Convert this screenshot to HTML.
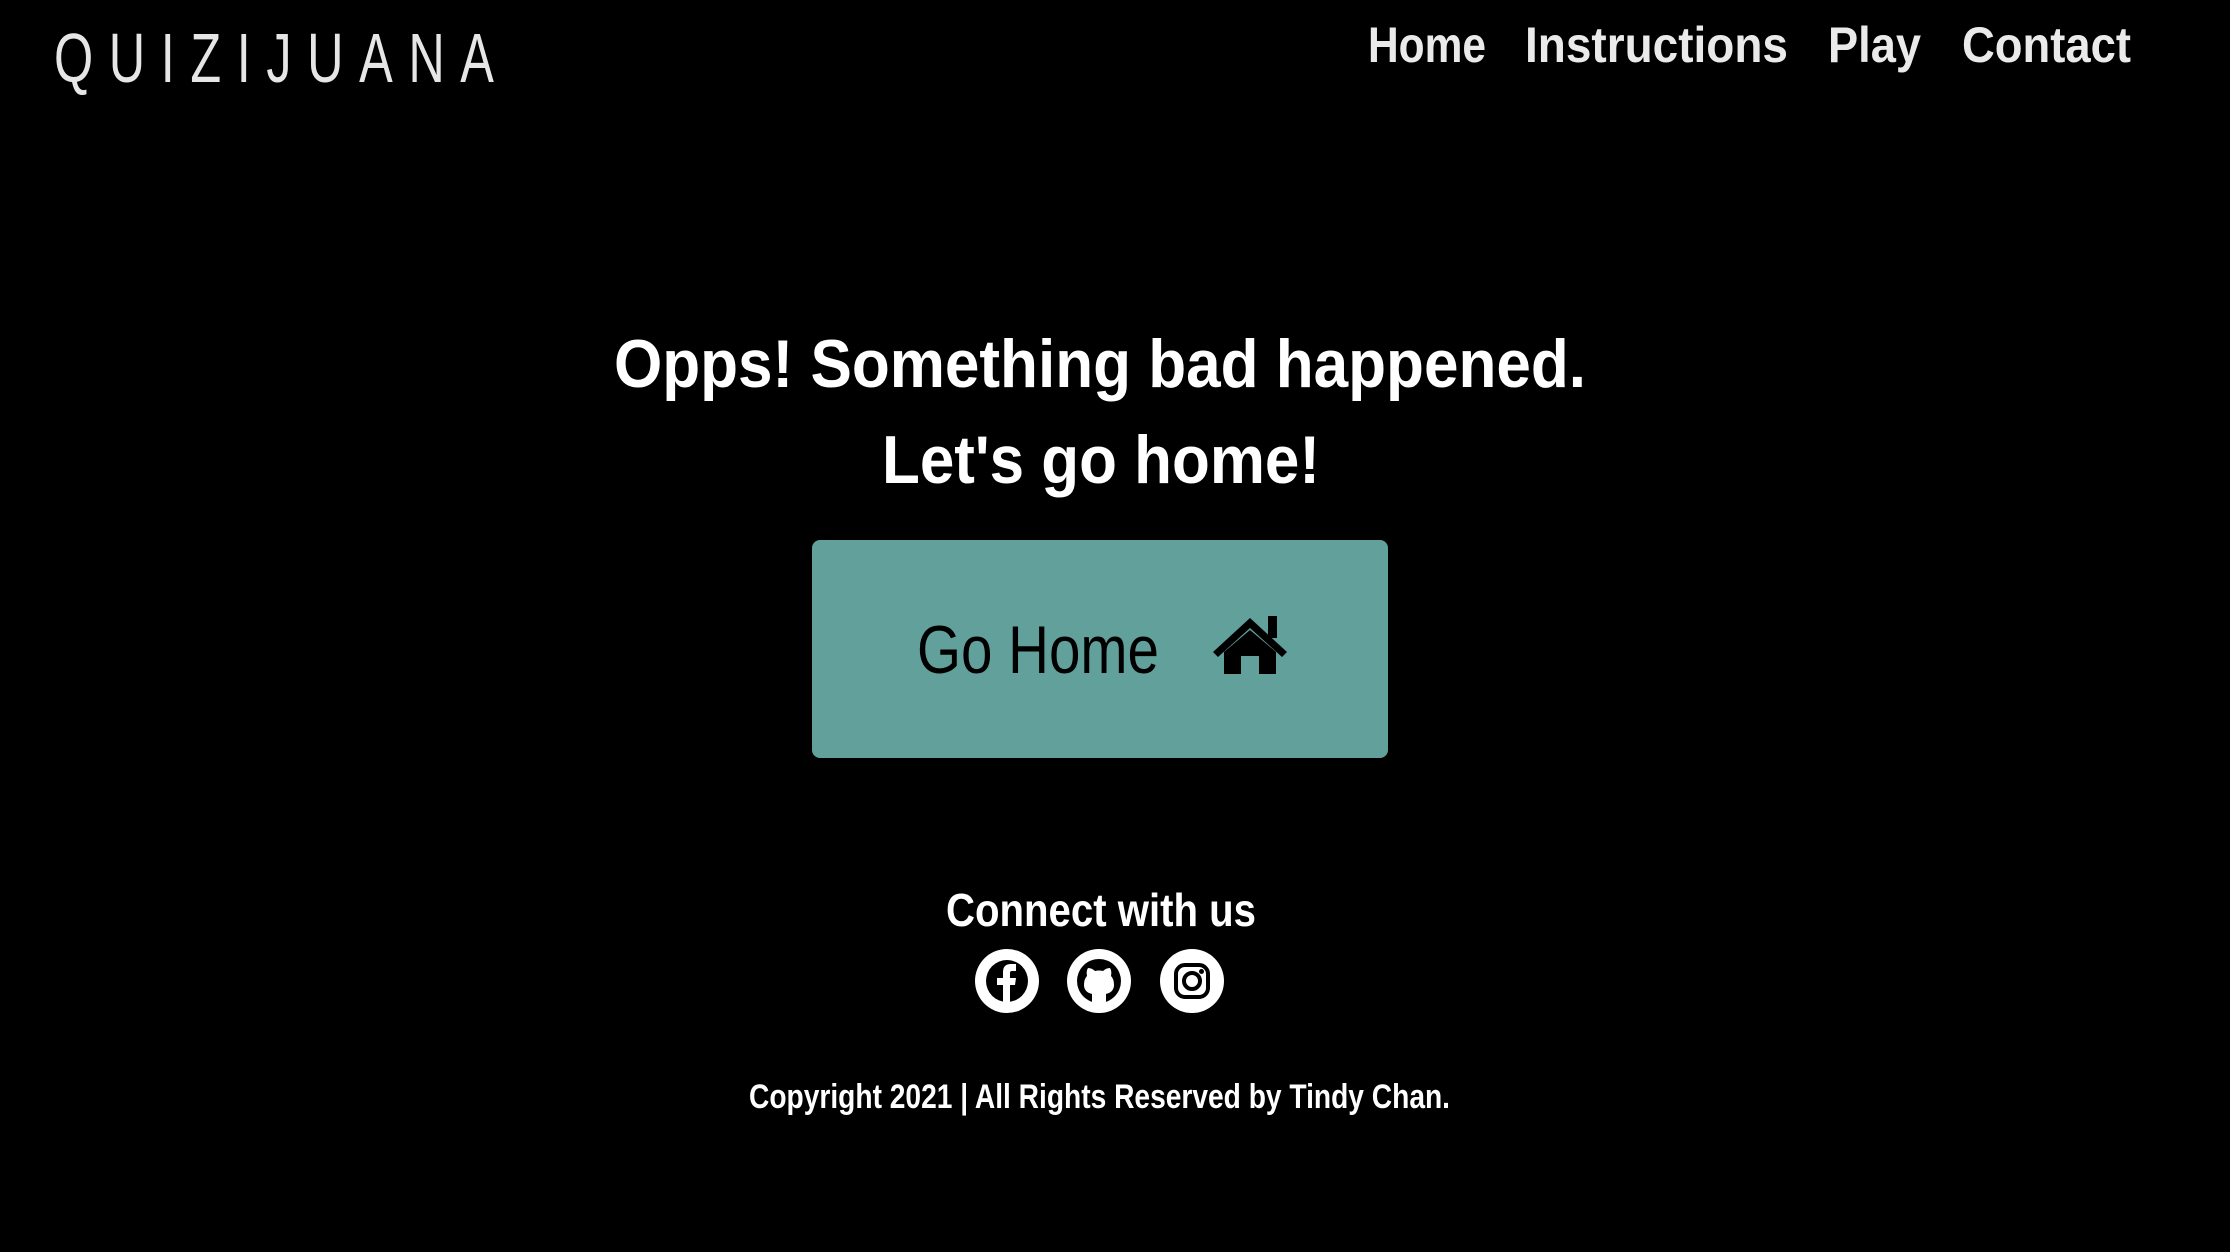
<!DOCTYPE html>
<html><head><meta charset="utf-8"><style>
html,body{margin:0;padding:0;background:#000;width:2230px;height:1252px;overflow:hidden}
svg{display:block}
text{font-family:"Liberation Sans",sans-serif}
</style></head><body>
<svg width="2230" height="1252" viewBox="0 0 2230 1252" xmlns="http://www.w3.org/2000/svg">
<rect width="2230" height="1252" fill="#000"/>
<g transform="translate(54,82) scale(0.72,1)">
<text x="0" y="0" font-size="70" fill="#e6e6e6" textLength="611" lengthAdjust="spacing">QUIZIJUANA</text>
</g>
<g fill="#eaeaea" font-size="50" font-weight="bold">
<text x="1368" y="62" textLength="118" lengthAdjust="spacingAndGlyphs">Home</text>
<text x="1525" y="62" textLength="263" lengthAdjust="spacingAndGlyphs">Instructions</text>
<text x="1828" y="62" textLength="93" lengthAdjust="spacingAndGlyphs">Play</text>
<text x="1962" y="62" textLength="169" lengthAdjust="spacingAndGlyphs">Contact</text>
</g>
<g fill="#fff" font-size="68" font-weight="bold">
<text x="614" y="387" textLength="972" lengthAdjust="spacingAndGlyphs">Opps! Something bad happened.</text>
<text x="882" y="483" textLength="438" lengthAdjust="spacingAndGlyphs">Let's go home!</text>
</g>
<rect x="812" y="540" width="576" height="218" rx="8" fill="#62a09c"/>
<text x="917" y="673" font-size="68" fill="#000" textLength="242" lengthAdjust="spacingAndGlyphs">Go Home</text>
<g fill="#000">
<path d="M1213 652 L1250 618 L1287 652 L1282 657 L1250 628 L1218 657 Z"/>
<rect x="1268" y="616" width="9" height="22"/>
<path d="M1224 652 L1250 630 L1276 652 L1276 674 L1259 674 L1259 656 L1241 656 L1241 674 L1224 674 Z"/>
</g>
<text x="946" y="926" font-size="46" font-weight="bold" fill="#fff" textLength="310" lengthAdjust="spacingAndGlyphs">Connect with us</text>
<g>
<circle cx="1007" cy="981" r="32" fill="#fff"/>
<circle cx="1007" cy="981" r="21" fill="#000"/>
<path d="M1003 1003 V985 H997 V978 H1003 V972 Q1003 964 1011 964 H1016 V971 H1012 Q1010 971 1010 973 V978 H1016 L1015 985 H1010 V1003 Z" fill="#fff"/>
<circle cx="1099" cy="981" r="32" fill="#fff"/>
<circle cx="1099" cy="981" r="22" fill="#000"/>
<path d="M1092 1003 V994 Q1084 992 1084 985 Q1084 979 1087 976 Q1086 971 1088 968 Q1092 968 1095 971 Q1099 970 1103 971 Q1106 968 1110 968 Q1112 971 1111 976 Q1114 979 1114 985 Q1114 992 1106 994 V1003 Z" fill="#fff"/>
<circle cx="1192" cy="981" r="32" fill="#fff"/>
<rect x="1176" y="965" width="32" height="32" rx="9" fill="none" stroke="#000" stroke-width="4"/>
<circle cx="1192" cy="981" r="8" fill="none" stroke="#000" stroke-width="4"/>
<circle cx="1201.5" cy="971.5" r="2.5" fill="#000"/>
</g>
<text x="749" y="1108" font-size="34" font-weight="bold" fill="#fff" textLength="701" lengthAdjust="spacingAndGlyphs">Copyright 2021 | All Rights Reserved by Tindy Chan.</text>
</svg>
</body></html>
